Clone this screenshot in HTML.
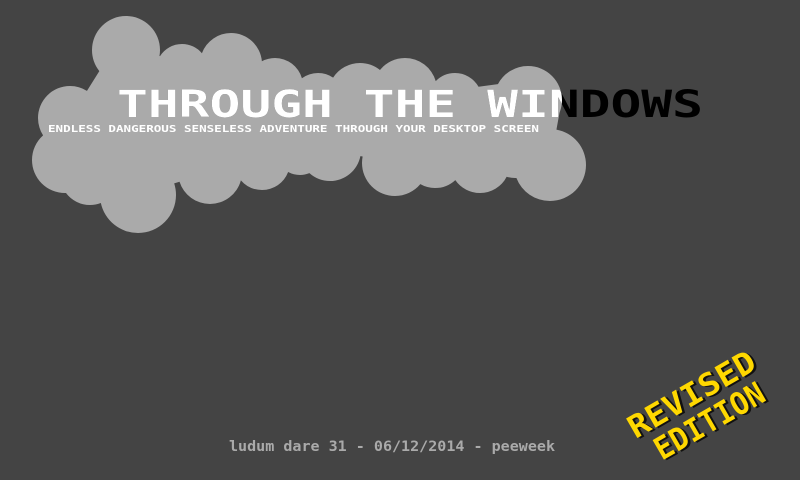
<!DOCTYPE html>
<html><head><style>
html,body{margin:0;padding:0;background:#444;width:800px;height:480px;overflow:hidden}
svg{display:block}
</style></head><body>
<svg width="800" height="480" viewBox="0 0 800 480" xmlns="http://www.w3.org/2000/svg">
<defs>
<clipPath id="cp">
<circle cx="126" cy="50" r="34"/><circle cx="182" cy="70" r="26"/><circle cx="231" cy="64" r="31"/>
<circle cx="275" cy="86" r="28"/><circle cx="318" cy="100" r="27"/><circle cx="360" cy="95" r="32"/>
<circle cx="405" cy="90" r="32"/><circle cx="455" cy="100" r="27"/><circle cx="528" cy="100" r="34"/>
<circle cx="550" cy="165" r="36"/><circle cx="480" cy="163" r="30"/><circle cx="435" cy="158" r="30"/>
<circle cx="395" cy="163" r="33"/><circle cx="330" cy="150" r="31"/><circle cx="262" cy="162" r="28"/>
<circle cx="210" cy="172" r="32"/><circle cx="138" cy="195" r="38"/><circle cx="90" cy="175" r="30"/>
<circle cx="65" cy="160" r="33"/><circle cx="70" cy="118" r="32"/>
<circle cx="300" cy="150" r="25"/><circle cx="515" cy="150" r="28"/>
<polygon points="70,118 100,70 126,50 182,60 231,64 275,80 318,100 360,80 405,75 455,90 528,80 560,110 550,165 480,163 435,158 395,163 330,150 262,162 210,172 138,195 90,175 65,160"/>
</clipPath>
</defs>
<rect x="0" y="0" width="800" height="480" fill="#aaa" clip-path="url(#cp)"/>
<g font-family="DejaVu Sans Mono, Liberation Mono, monospace" font-weight="bold">
<text x="117" y="117" font-size="37" textLength="586" lengthAdjust="spacingAndGlyphs" fill="#000">THROUGH THE WINDOWS</text>
<g clip-path="url(#cp)">
<text x="117" y="117" font-size="37" textLength="586" lengthAdjust="spacingAndGlyphs" fill="#fff">THROUGH THE WINDOWS</text>
</g>
<text x="48" y="132" font-size="10" textLength="491" lengthAdjust="spacingAndGlyphs" fill="#fff">ENDLESS DANGEROUS SENSELESS ADVENTURE THROUGH YOUR DESKTOP SCREEN</text>
<text x="229" y="451" font-size="14" textLength="326" lengthAdjust="spacingAndGlyphs" fill="#aaa">ludum dare 31 - 06/12/2014 - peeweek</text>
<g transform="translate(703,414) rotate(-30)" font-size="31" text-anchor="middle">
<text x="2" y="-10" fill="#111" textLength="142" lengthAdjust="spacingAndGlyphs">REVISED</text>
<text x="0" y="-12" fill="#ffd800" textLength="142" lengthAdjust="spacingAndGlyphs">REVISED</text>
<text x="4" y="22" fill="#111" textLength="122" lengthAdjust="spacingAndGlyphs">EDITION</text>
<text x="2" y="20" fill="#ffd800" textLength="122" lengthAdjust="spacingAndGlyphs">EDITION</text>
</g>
</g>
</svg>
</body></html>
